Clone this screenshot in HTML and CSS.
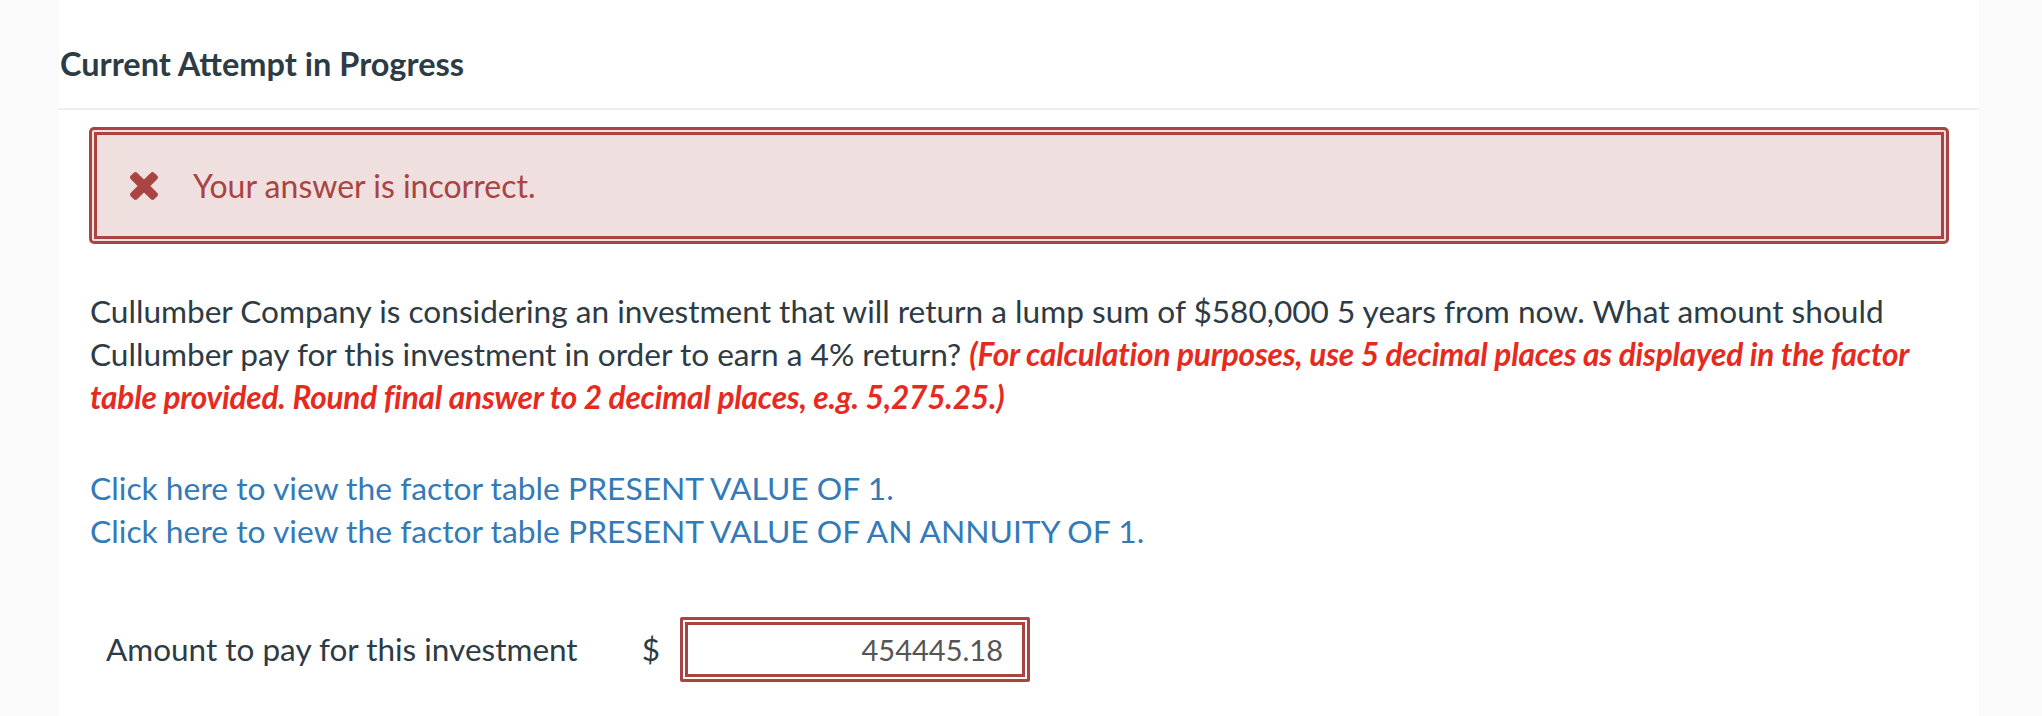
FILE: index.html
```html
<!DOCTYPE html>
<html lang="en">
<head>
<meta charset="utf-8">
<title>Current Attempt in Progress</title>
<link rel="stylesheet" href="styles.css">
</head>
<body>
<div class="page">
  <div class="gutter-left"></div>
  <main class="main">
    <header class="attempt-header">
      <h2 class="attempt-title">Current Attempt in Progress</h2>
    </header>
    <section class="question">
      <div class="alert">
        <svg class="alert-icon" viewBox="302 366 1188 1188" aria-hidden="true">
          <path d="M1490 1322q0 40-28 68l-136 136q-28 28-68 28t-68-28l-294-294-294 294q-28 28-68 28t-68-28l-136-136q-28-28-28-68t28-68l294-294-294-294q-28-28-28-68t28-68l136-136q28-28 68-28t68 28l294 294 294-294q28-28 68-28t68 28l136 136q28 28 28 68t-28 68l-294 294 294 294q28 28 28 68z"/>
        </svg>
        <span class="alert-text">Your answer is incorrect.</span>
      </div>
      <p class="question-text">Cullumber Company is considering an investment that will return a lump sum of $580,000 5 years from now. What amount should Cullumber pay for this investment in order to earn a 4% return? <em class="instruction">(For calculation purposes, use 5 decimal places as displayed in the factor table provided. Round final answer to 2 decimal places, e.g. 5,275.25.)</em></p>
      <div class="links">
        <a class="factor-link" href="#">Click here to view the factor table PRESENT VALUE OF 1.</a>
        <a class="factor-link" href="#">Click here to view the factor table PRESENT VALUE OF AN ANNUITY OF 1.</a>
      </div>
      <div class="answer-row">
        <span class="answer-label">Amount to pay for this investment</span>
        <span class="currency">$</span>
        <div class="answer-input">454445.18</div>
      </div>
    </section>
  </main>
  <div class="gutter-right"></div>
</div>
</body>
</html>
```

FILE: styles.css
```css
html, body {
  margin: 0;
  padding: 0;
}
body {
  background: #fafafa;
  font-family: "Lato", "Open Sans", sans-serif;
  color: #2d3b45;
}
.page {
  display: flex;
  min-height: 716px;
}
.gutter-left {
  width: 59px;
  flex: none;
}
.gutter-right {
  flex: 1;
}
.main {
  width: 1920px;
  flex: none;
  background: #fff;
}
.attempt-header {
  padding: 44px 0 24px 1px;
  border-bottom: 2px solid #eeeeee;
}
.attempt-title {
  margin: 0;
  font-size: 32.5px;
  line-height: 40px;
  font-weight: 700;
  color: #2d3b45;
}
.question {
  padding: 17px 30px 0 30px;
}
.alert {
  display: flex;
  align-items: center;
  gap: 35px;
  border: 8px double #a94442;
  border-radius: 5px;
  background: #efdfdf;
  padding: 29px 30px 29px 33px;
}
.alert-icon {
  width: 28px;
  height: 28px;
  fill: #a94442;
  flex: none;
}
.alert-text {
  font-size: 32px;
  line-height: 43px;
  color: #a94442;
}
.question-text {
  margin: 46px 0 0 1px;
  font-size: 31.6px;
  line-height: 43px;
  color: #2d3b45;
}
.instruction {
  font-style: italic;
  font-weight: 700;
  letter-spacing: -0.2px;
  color: #e62a1e;
}
.links {
  margin-top: 48px;
  display: flex;
  flex-direction: column;
  align-items: flex-start;
}
.factor-link {
  font-size: 31.8px;
  line-height: 43px;
  color: #337ab7;
  text-decoration: none;
  margin-left: 1px;
}
.answer-row {
  margin-top: 64px;
  display: flex;
  align-items: center;
  padding-left: 17px;
}
.answer-label {
  font-size: 31.5px;
  line-height: 43px;
  color: #2d3b45;
}
.currency {
  margin-left: 64px;
  font-size: 31.5px;
  line-height: 43px;
  color: #2d3b45;
}
.answer-input {
  margin-left: 20px;
  width: 350px;
  height: 65px;
  box-sizing: border-box;
  border: 8px double #a94442;
  border-radius: 2px;
  padding-right: 19px;
  display: flex;
  align-items: center;
  justify-content: flex-end;
  font-size: 29px;
  color: #555555;
}
```
